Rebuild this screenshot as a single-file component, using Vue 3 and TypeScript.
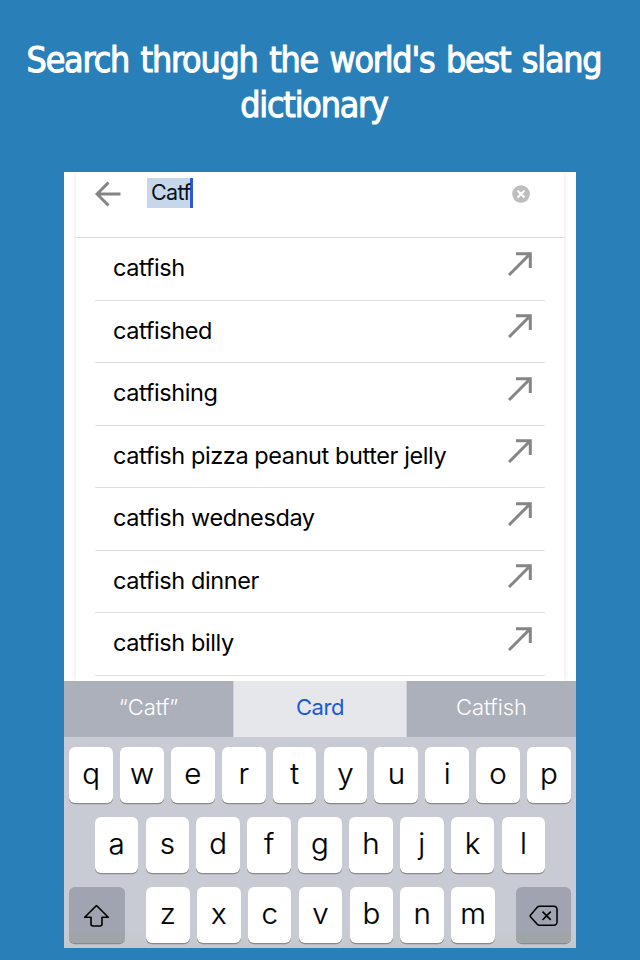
<script setup lang="ts">
const results: string[] = [
  'catfish',
  'catfished',
  'catfishing',
  'catfish pizza peanut butter jelly',
  'catfish wednesday',
  'catfish dinner',
  'catfish billy',
]
const topKeys: string[] = [...'qwertyuiop']
const homeKeys: string[] = [...'asdfghjkl']
const bottomKeys: string[] = [...'zxcvbnm']
</script>

<template>
  <main class="page">
    <h1 class="title">
      <span class="line first">Search through the world's best slang</span>
      <span class="line second">dictionary</span>
    </h1>
    <section class="phone">
      <div class="sheet">
        <header class="search">
          <svg class="back" viewBox="0 0 26 26"><path d="M25.5 13H2M13.5 1.5L2 13L13.5 24.5" /></svg>
          <div class="query"><span>Catf</span></div>
          <svg class="clear" viewBox="0 0 18 18">
            <circle cx="9" cy="9" r="8.8" />
            <path d="M5.5 5.5L12.5 12.5M12.5 5.5L5.5 12.5" />
          </svg>
        </header>
        <ul class="results">
          <li v-for="item in results" :key="item">
            <span>{{ item }}</span>
            <svg viewBox="0 0 24 24"><path d="M1 23L22 2M8 1.7H22.3V16" /></svg>
          </li>
        </ul>
      </div>
      <div class="suggestions">
        <span class="s-left">“Catf”</span>
        <span class="s-mid">Card</span>
        <span class="s-right">Catfish</span>
      </div>
      <div class="keyboard">
        <div class="keys">
          <button v-for="k in topKeys" :key="k" class="key">{{ k }}</button>
        </div>
        <div class="keys">
          <button v-for="k in homeKeys" :key="k" class="key">{{ k }}</button>
        </div>
        <div class="keys spread">
          <button class="key special" aria-label="Shift">
            <svg viewBox="0 0 28 24"><path d="M14 1.5L2.2 13.3H8.5V20Q8.5 22 10.5 22H17.5Q19.5 22 19.5 20V13.3H25.8Z" /></svg>
          </button>
          <div class="keys letters">
            <button v-for="k in bottomKeys" :key="k" class="key">{{ k }}</button>
          </div>
          <button class="key special" aria-label="Delete">
            <svg viewBox="0 0 30 24">
              <path d="M11 2H25.5Q29 2 29 5.5V18Q29 21.5 25.5 21.5H11Q9.5 21.5 8.5 20.5L1.5 12.7Q.9 12 1.5 11.2L8.5 3Q9.5 2 11 2Z" />
              <path d="M14 7.5L22.5 16M22.5 7.5L14 16" />
            </svg>
          </button>
        </div>
      </div>
    </section>
  </main>
</template>

<style>
body { margin: 0; }
</style>

<style scoped>
* { box-sizing: border-box; }
.page {
  width: 640px;
  height: 960px;
  overflow: hidden;
  background: #2980b9;
  font-family: Inter, "Liberation Sans", sans-serif;
}
.title {
  height: 172px;
  margin: 0;
  padding: 37px 12px 0 0;
  display: flex;
  flex-direction: column;
  align-items: center;
  color: #fff;
  font: 400 35.5px/45px "DejaVu Sans Condensed", "DejaVu Sans", sans-serif;
  font-stretch: condensed;
  letter-spacing: -1.2px;
  word-spacing: 2.6px;
  -webkit-text-stroke: 1px #fff;
}
.line { white-space: nowrap; }
.phone {
  width: 512px;
  height: 776px;
  margin: 0 auto;
  overflow: hidden;
  background: #fff;
}
.sheet {
  height: 509px;
  margin: 0 12px;
  overflow: hidden;
  box-shadow: 0 0 6px rgba(0, 0, 0, .11);
  clip-path: inset(0 -12px);
}
.search {
  height: 66px;
  display: flex;
  align-items: flex-start;
  padding: 6px 34px 0 19px;
  border-bottom: 1px solid #dedede;
}
.back { width: 26px; height: 26px; margin-top: 2.5px; fill: none; stroke: #858585; stroke-width: 3; }
.query {
  width: 46px;
  height: 30px;
  margin-left: 26px;
  padding-left: 4px;
  background: #c6d7ea;
  border-right: 3px solid #2f57d9;
  color: #0a1017;
  font-size: 21.5px;
  line-height: 29px;
  letter-spacing: -.7px;
  white-space: nowrap;
}
.clear { width: 18px; height: 18px; margin: 7px 0 0 auto; fill: #bdbdbd; }
.clear path { stroke: #fff; stroke-width: 2; }
.results { margin: 0; padding: 0 19px; list-style: none; }
.results li {
  height: 62.5px;
  display: flex;
  justify-content: space-between;
  padding: 0 13px 0 18px;
  border-bottom: 1px solid #dedede;
  font-size: 23.5px;
  line-height: 60px;
  letter-spacing: -.41px;
  color: #000;
}
.results svg { width: 24px; height: 24px; margin-top: 13.5px; fill: none; stroke: #858585; stroke-width: 3; }
.suggestions {
  height: 56px;
  display: grid;
  grid-template-columns: 169px 174px 169px;
  background: #abb0bb;
  color: #fff;
  font-size: 22px;
  font-weight: 300;
  line-height: 52px;
  text-align: center;
}
.s-mid {
  background: #e5e7eb;
  color: #1b5bd3;
  border-left: 1px solid #ccd0d7;
  border-right: 1px solid #ccd0d7;
  font-weight: 400;
  letter-spacing: -.4px;
}
.keyboard {
  height: 211px;
  padding: 10px 5px 0;
  display: flex;
  flex-direction: column;
  align-items: center;
  gap: 14px;
  background: linear-gradient(#c8cbd3 0 190px, #c5c8ca 211px);
}
.keys { display: flex; gap: 7.2px; }
.letters { padding-left: 1px; }
.spread { width: 502px; justify-content: space-between; }
.key {
  width: 43.7px;
  height: 56px;
  padding: 0 0 4px;
  border: 0;
  border-radius: 6px;
  background: #fff;
  box-shadow: 0 1.3px 0 #898a8d;
  color: #000;
  font-family: inherit;
  font-size: 29.5px;
  font-weight: 300;
  line-height: 52px;
  -webkit-text-stroke: .2px #000;
}
.special {
  width: 55.5px;
  display: flex;
  align-items: center;
  justify-content: center;
  padding: 2px 0 0;
  background: linear-gradient(#a0a4b1 0 78%, #9fa4a8 84%);
}
.special svg { width: 29px; height: 24px; fill: none; stroke: #000; stroke-width: 1.6; stroke-linejoin: round; }
</style>
